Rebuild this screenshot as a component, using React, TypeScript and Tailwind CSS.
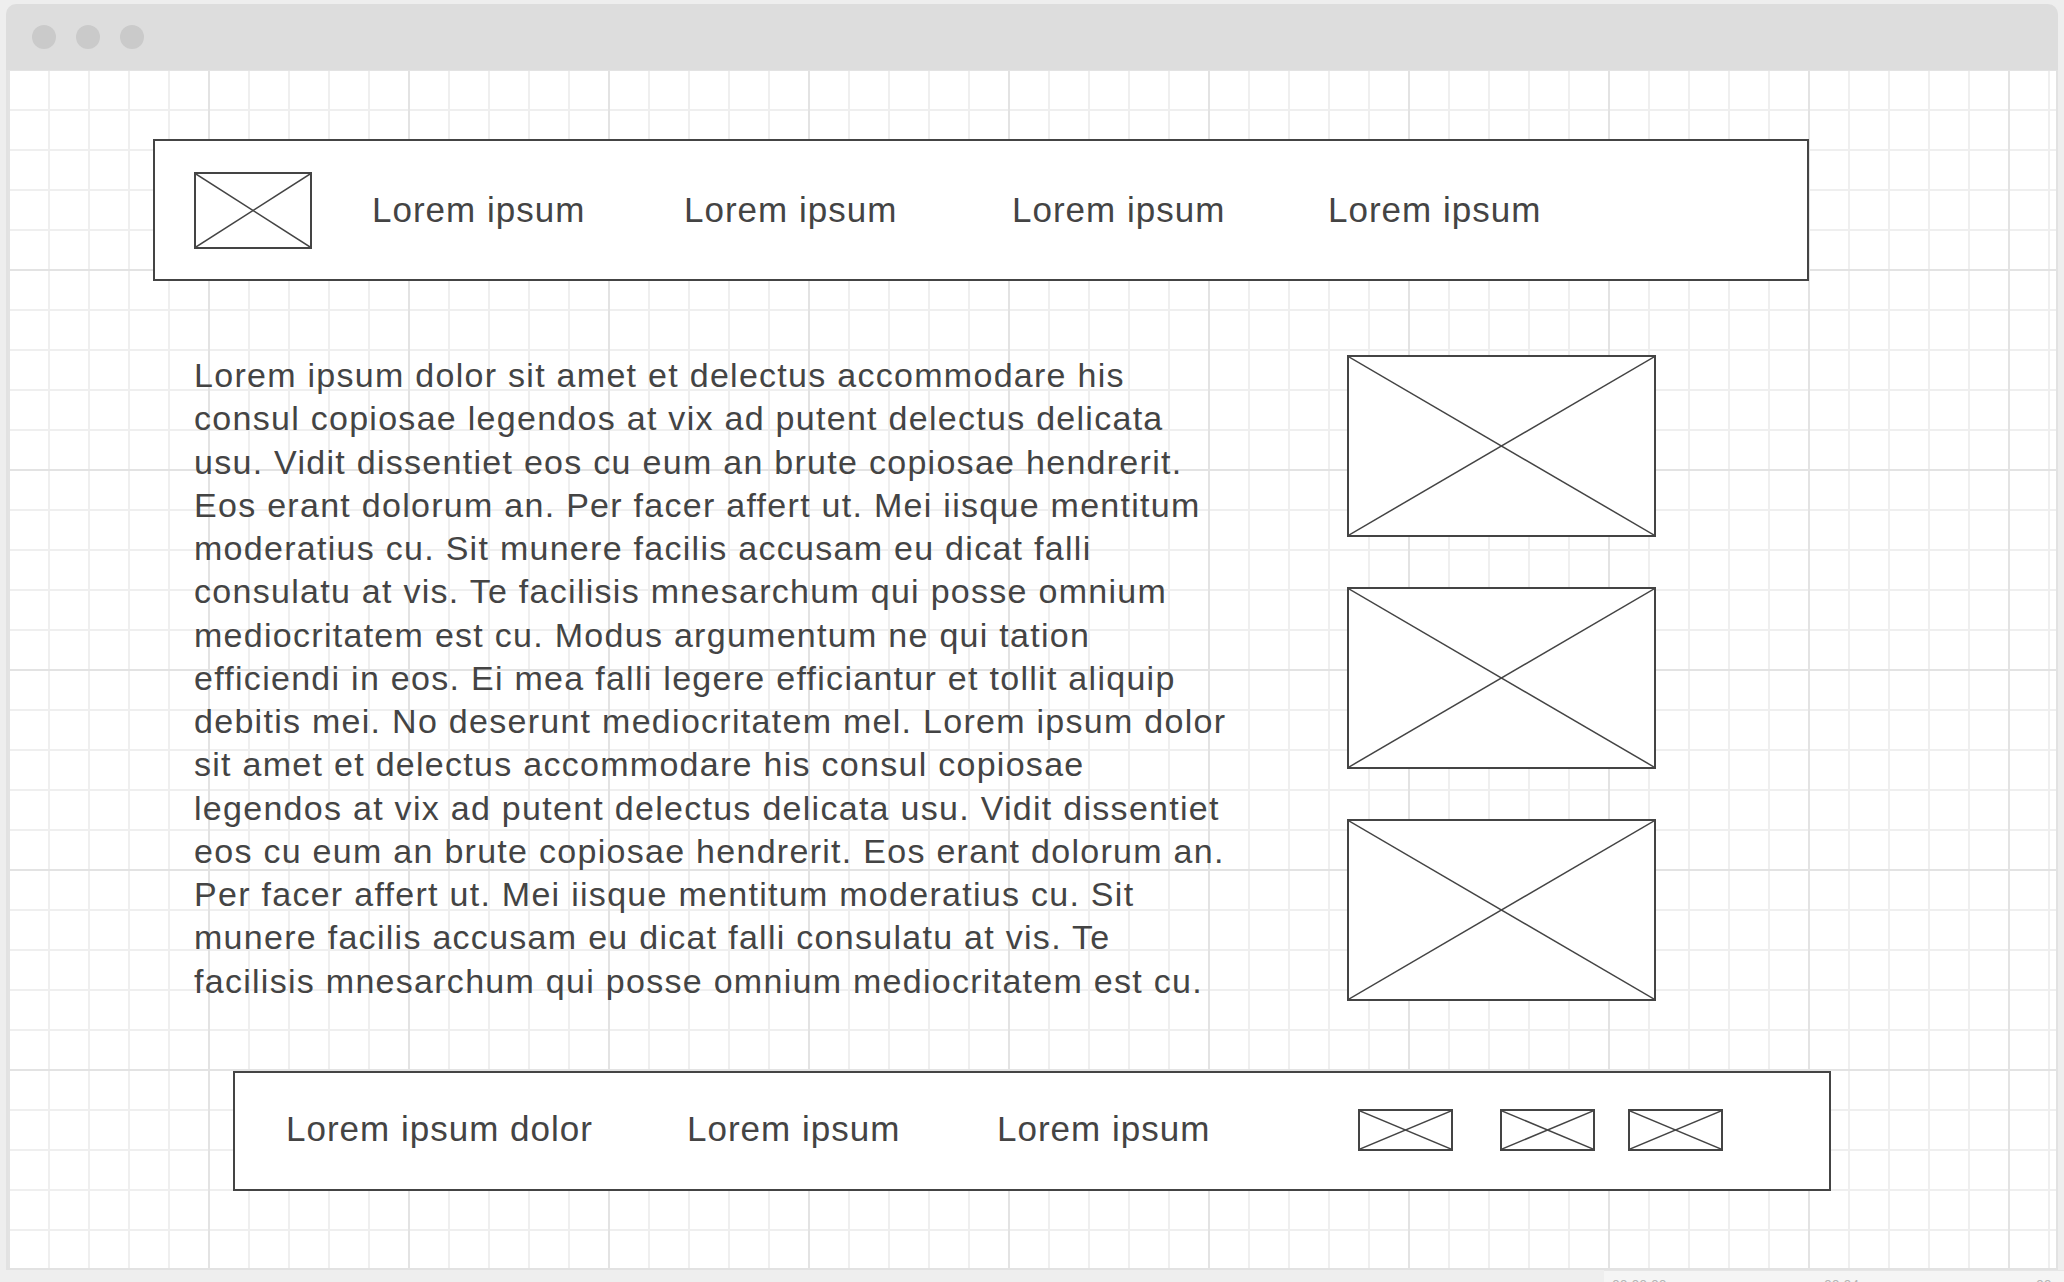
import React from "react";

function Placeholder({ className }: { className: string }) {
  return (
    <div className={"shrink-0 border-2 border-[#444444] bg-white " + className}>
      <svg className="block h-full w-full" viewBox="0 0 100 100" preserveAspectRatio="none">
        <line x1="0" y1="0" x2="100" y2="100" stroke="#444444" strokeWidth="1.5" vectorEffect="non-scaling-stroke" />
        <line x1="100" y1="0" x2="0" y2="100" stroke="#444444" strokeWidth="1.5" vectorEffect="non-scaling-stroke" />
      </svg>
    </div>
  );
}

const lines = [
  "Lorem ipsum dolor sit amet et delectus accommodare his",
  "consul copiosae legendos at vix ad putent delectus delicata",
  "usu. Vidit dissentiet eos cu eum an brute copiosae hendrerit.",
  "Eos erant dolorum an. Per facer affert ut. Mei iisque mentitum",
  "moderatius cu. Sit munere facilis accusam eu dicat falli",
  "consulatu at vis. Te facilisis mnesarchum qui posse omnium",
  "mediocritatem est cu. Modus argumentum ne qui tation",
  "efficiendi in eos. Ei mea falli legere efficiantur et tollit aliquip",
  "debitis mei. No deserunt mediocritatem mel. Lorem ipsum dolor",
  "sit amet et delectus accommodare his consul copiosae",
  "legendos at vix ad putent delectus delicata usu. Vidit dissentiet",
  "eos cu eum an brute copiosae hendrerit. Eos erant dolorum an.",
  "Per facer affert ut. Mei iisque mentitum moderatius cu. Sit",
  "munere facilis accusam eu dicat falli consulatu at vis. Te",
  "facilisis mnesarchum qui posse omnium mediocritatem est cu.",
];

export default function App() {
  return (
    <div className="h-[1282px] w-[2064px] overflow-hidden bg-[#eeeeee] pl-[6px] pt-[4px] font-['Liberation_Sans',Arial,sans-serif] text-[#444444]">
      <div className="flex w-[2052px] flex-col">
        {/* title bar */}
        <div className="flex h-[66px] items-center gap-[20px] rounded-t-[10px] bg-[#dddddd] pl-[26px]">
          <div className="h-[24px] w-[24px] rounded-full bg-[#cacaca]" />
          <div className="h-[24px] w-[24px] rounded-full bg-[#cacaca]" />
          <div className="h-[24px] w-[24px] rounded-full bg-[#cacaca]" />
        </div>
        {/* canvas */}
        <div className="flex h-[1200px] flex-col border-x-2 border-b-2 border-[#e2e2e2] bg-white bg-[linear-gradient(to_right,#e3e3e3_2px,transparent_2px),linear-gradient(to_bottom,#e3e3e3_2px,transparent_2px),linear-gradient(to_right,#efefef_2px,transparent_2px),linear-gradient(to_bottom,#efefef_2px,transparent_2px)] bg-[length:200px_200px,200px_200px,40px_40px,40px_40px] bg-[position:0px_-1px]">
          {/* nav */}
          <div className="ml-[145px] mt-[69px] flex h-[142px] w-[1656px] items-center border-2 border-[#444444] bg-white pb-[2px] pl-[39px] text-[35px] leading-[35px] tracking-[1px]">
            <Placeholder className="mt-[3px] h-[77px] w-[118px]" />
            <div className="ml-[60px] w-[312px] whitespace-nowrap">Lorem ipsum</div>
            <div className="w-[328px] whitespace-nowrap">Lorem ipsum</div>
            <div className="w-[316px] whitespace-nowrap">Lorem ipsum</div>
            <div className="whitespace-nowrap">Lorem ipsum</div>
          </div>
          {/* main */}
          <div className="ml-[186px] mt-[73px] flex h-[647px] items-start">
            <div className="w-[1100px] text-[34px] leading-[43.25px] tracking-[1.28px]">
              {lines.map((l, i) => (
                <div key={i} className="whitespace-nowrap">
                  {l}
                </div>
              ))}
            </div>
            <div className="ml-[53px] mt-[1px] flex flex-col gap-[50px]">
              <Placeholder className="h-[182px] w-[309px]" />
              <Placeholder className="h-[182px] w-[309px]" />
              <Placeholder className="h-[182px] w-[309px]" />
            </div>
          </div>
          {/* footer bar */}
          <div className="ml-[225px] mt-[70px] flex h-[120px] w-[1598px] items-center border-2 border-[#444444] bg-white pb-[5px] pl-[51px] text-[35px] leading-[35px] tracking-[1px]">
            <div className="w-[401px] whitespace-nowrap">Lorem ipsum dolor</div>
            <div className="w-[310px] whitespace-nowrap">Lorem ipsum</div>
            <div className="w-[361px] whitespace-nowrap">Lorem ipsum</div>
            <Placeholder className="mt-[3px] h-[42px] w-[95px]" />
            <Placeholder className="ml-[47px] mt-[3px] h-[42px] w-[95px]" />
            <Placeholder className="ml-[33px] mt-[3px] h-[42px] w-[95px]" />
          </div>
        </div>
      </div>
      {/* bottom strip */}
      <div className="ml-[1598px] flex h-[12px] w-[460px] items-start overflow-hidden border-t border-[#e6e6e6] bg-[#f5f5f5] text-[14px] leading-[14px] text-[#b5b5b5]">
        <div className="ml-[8px] mt-[7px] w-[212px] whitespace-nowrap">00:00.00</div>
        <div className="mt-[7px] w-[212px] whitespace-nowrap">00:04</div>
        <div className="mt-[7px] whitespace-nowrap">00</div>
      </div>
    </div>
  );
}
